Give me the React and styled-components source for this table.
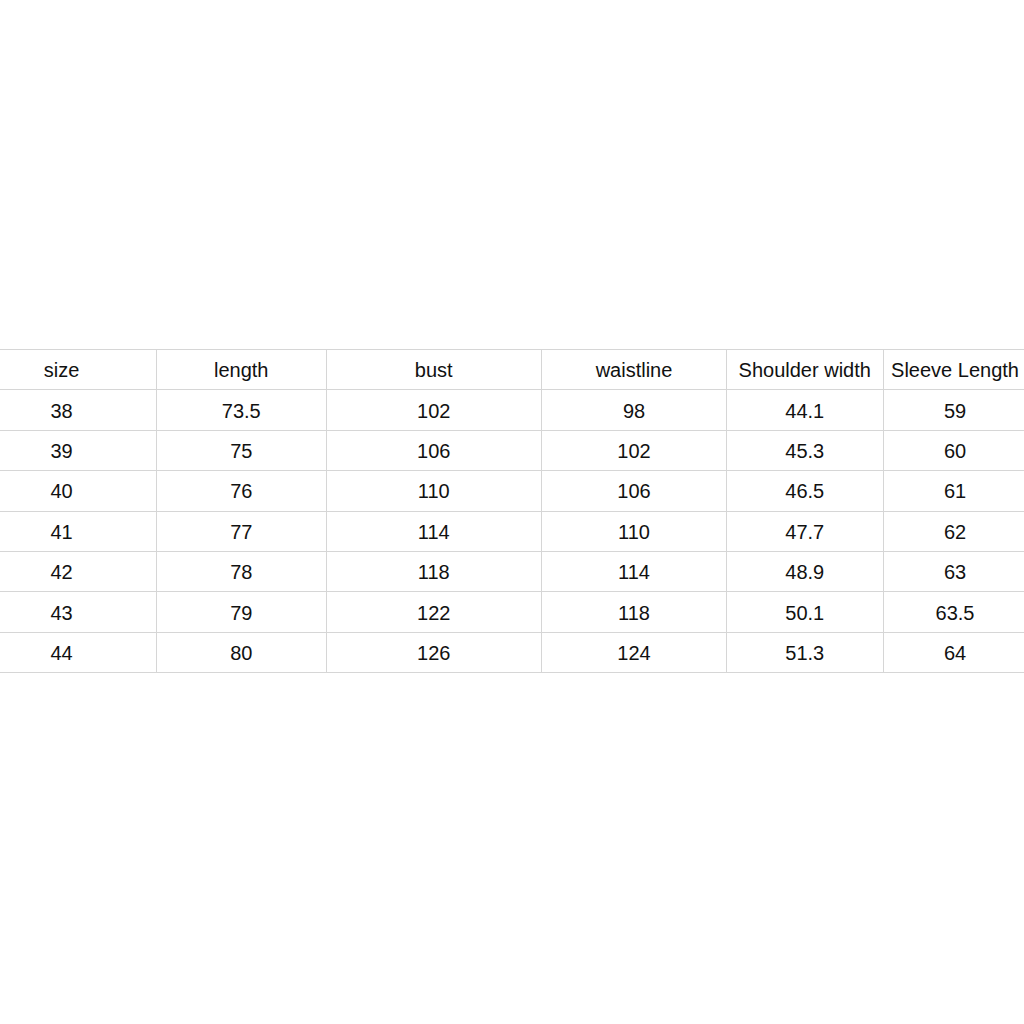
import React from "react";
import styled, { createGlobalStyle } from "styled-components";

const Global = createGlobalStyle`
  html, body { margin: 0; padding: 0; background: #fff; }
  body { font-family: Arial, "Liberation Sans", sans-serif; }
`;

const Page = styled.div`
  width: 1024px;
  height: 1024px;
  overflow: hidden;
  background: #fff;
  padding-top: 349px;
  box-sizing: border-box;
`;

const Table = styled.table`
  border-collapse: collapse;
  table-layout: fixed;
  margin-left: -34px;
  width: 1060px;
  font-family: Arial, "Liberation Sans", sans-serif;
  font-size: 20px;
  color: #111;
`;

const Row = styled.tr`
  height: 40.4px;
`;

const Cell = styled.td`
  border: 1px solid #d6d6d6;
  border-right: ${(p) => (p.$last ? "none" : "1px solid #d6d6d6")};
  text-align: center;
  vertical-align: middle;
  padding: 1px 0 0;
  white-space: nowrap;
  line-height: 22px;
`;

const widths = [190, 169.5, 215.5, 185, 156.5, 143.5];
const header = ["size", "length", "bust", "waistline", "Shoulder width", "Sleeve Length"];
const rows = [
  ["38", "73.5", "102", "98", "44.1", "59"],
  ["39", "75", "106", "102", "45.3", "60"],
  ["40", "76", "110", "106", "46.5", "61"],
  ["41", "77", "114", "110", "47.7", "62"],
  ["42", "78", "118", "114", "48.9", "63"],
  ["43", "79", "122", "118", "50.1", "63.5"],
  ["44", "80", "126", "124", "51.3", "64"],
];

export default function App() {
  return (
    <>
      <Global />
      <Page>
        <Table>
          <colgroup>
            {widths.map((w, i) => (
              <col key={i} style={{ width: w }} />
            ))}
          </colgroup>
          <tbody>
            {[header, ...rows].map((r, ri) => (
              <Row key={ri}>
                {r.map((c, ci) => (
                  <Cell key={ci} $last={ci === r.length - 1}>
                    {c}
                  </Cell>
                ))}
              </Row>
            ))}
          </tbody>
        </Table>
      </Page>
    </>
  );
}
